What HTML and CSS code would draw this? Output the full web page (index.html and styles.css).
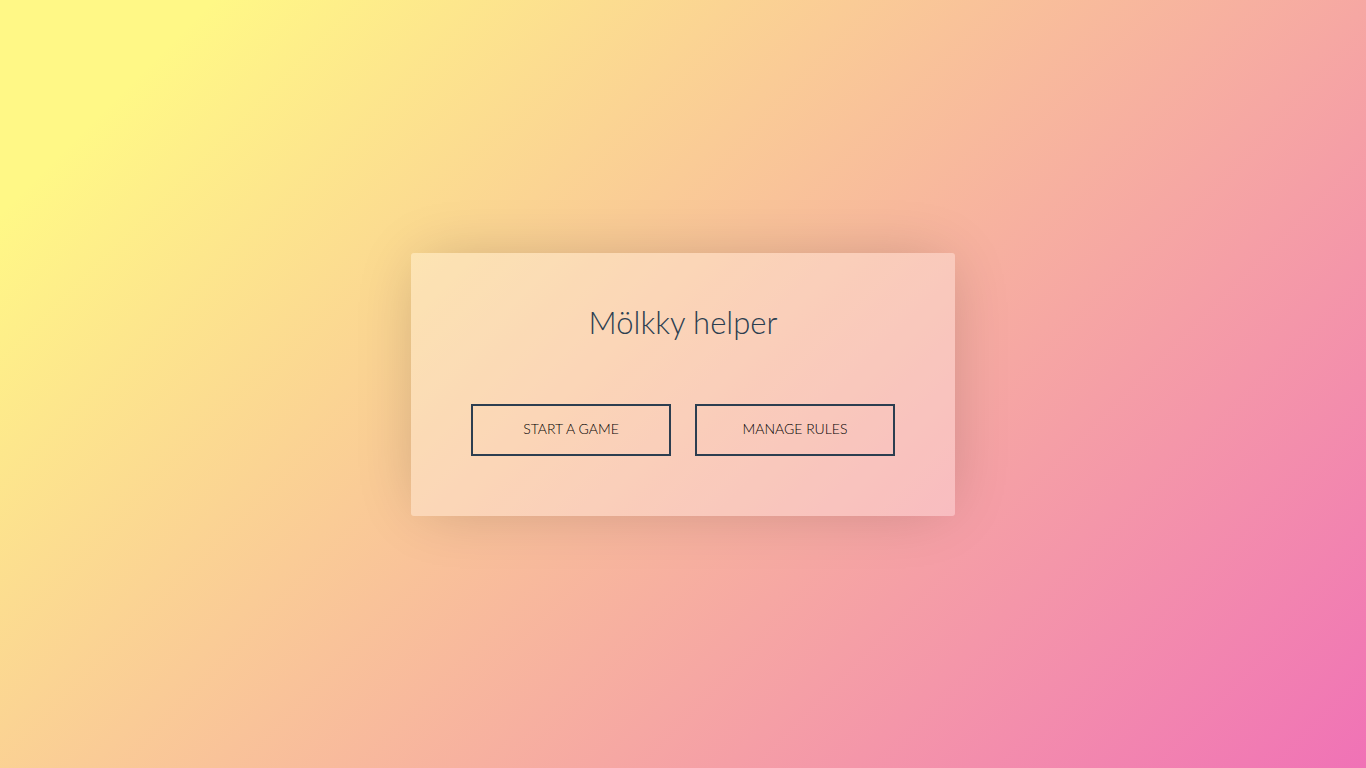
FILE: index.html
```html
<!DOCTYPE html>
<html lang="en">
<head>
<meta charset="utf-8">
<meta name="viewport" content="width=device-width, initial-scale=1">
<title>Mölkky helper</title>
<link rel="stylesheet" href="styles.css">
</head>
<body>
<main class="panel">
  <h1 class="title">Mölkky helper</h1>
  <div class="actions">
    <button class="button" type="button">START A GAME</button>
    <button class="button" type="button">MANAGE RULES</button>
  </div>
</main>
</body>
</html>
```

FILE: styles.css
```css
* {
  box-sizing: border-box;
}

body {
  margin: 0;
  min-height: 100vh;
  display: flex;
  align-items: center;
  justify-content: center;
  background: linear-gradient(135deg, #fff886 10%, #f072b6 100%);
  color: #2c3e50;
  font-family: Avenir, Lato, sans-serif;
}

.panel {
  padding: 48px 60px 60px;
  border-radius: 3px;
  background: rgba(255, 255, 255, 0.3);
  box-shadow: 0 0 60px -10px rgba(0, 0, 0, 0.2);
}

.title {
  margin: 0 0 60px;
  font-size: 31px;
  font-weight: 300;
  line-height: 43px;
  text-align: center;
}

.actions {
  display: flex;
  flex-wrap: wrap;
  justify-content: center;
  gap: 24px;
}

.button {
  width: 200px;
  height: 52px;
  padding: 0 0 2px;
  border: 2px solid #2c3e50;
  background: transparent;
  color: #000;
  font-family: inherit;
  font-size: 14px;
  font-weight: 300;
  cursor: pointer;
}
```
